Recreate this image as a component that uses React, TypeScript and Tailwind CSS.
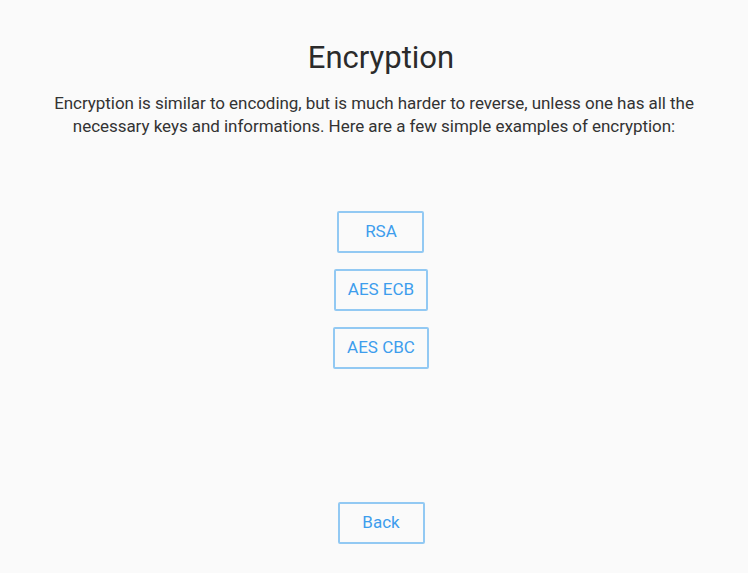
const OPTIONS = ["RSA", "AES ECB", "AES CBC"];

function OutlineButton({ label }: { label: string }) {
  return (
    <button className="h-[42px] min-w-[87px] px-[12px] border-2 border-[#92c9f3] rounded-[2px] text-[17px] text-[#3d9ded] bg-transparent">
      {label}
    </button>
  );
}

export default function App() {
  return (
    <div
      className="w-[748px] h-[573px] bg-[#fafafa] flex flex-col items-center overflow-hidden"
      style={{ fontFamily: "Roboto, 'Noto Sans', sans-serif" }}
    >
      <h1 className="mt-[40px] ml-[14px] text-[31px] leading-[36px] text-[#2b2b2b]">Encryption</h1>
      <p className="mt-[16px] text-[17px] tracking-[-0.05px] leading-[23px] text-[#333] text-center">
        Encryption is similar to encoding, but is much harder to reverse, unless one has all the
        <br />
        necessary keys and informations. Here are a few simple examples of encryption:
      </p>
      <div className="mt-[73px] ml-[14px] flex flex-col items-center gap-[16px]">
        {OPTIONS.map((o) => (
          <OutlineButton key={o} label={o} />
        ))}
      </div>
      <div className="mt-[133px] ml-[14px]">
        <OutlineButton label="Back" />
      </div>
    </div>
  );
}
